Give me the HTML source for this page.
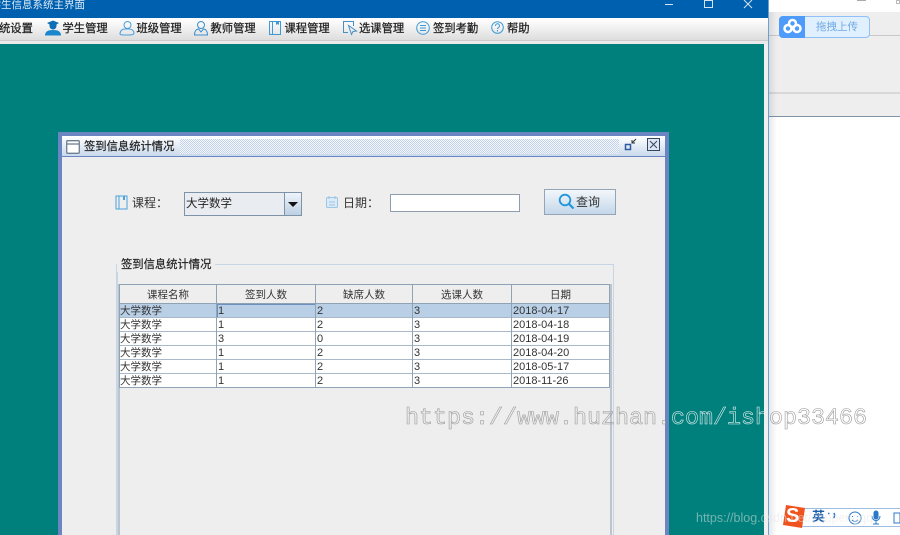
<!DOCTYPE html>
<html><head><meta charset="utf-8">
<style>
*{box-sizing:border-box;margin:0;padding:0}
html,body{width:900px;height:535px;overflow:hidden;background:#fff}
body{position:relative;font-family:"Liberation Sans","Noto Sans CJK SC",sans-serif;font-size:11px;color:#333;filter:blur(.25px)}
.a{position:absolute}
.t{position:absolute;white-space:nowrap;line-height:14px}
.m{font-size:11.300px;color:#222;top:22px;-webkit-text-stroke:.25px #222}
.h{position:absolute;top:285px;height:19px;line-height:20px;text-align:center;font-size:10.500px;color:#333;background:#eee;border-right:1px solid #8fa3b5}
.c{position:absolute;height:14px;line-height:14px;font-size:10.500px;color:#333;padding-left:1px;white-space:nowrap}
.n{font-size:11px}
.vl{position:absolute;width:1px;background:#8fa3b5;top:304px;height:83px}
.hl{position:absolute;left:120px;width:489px;height:1px;background:#a9b9c9}
</style></head><body>
<!-- app window -->
<div class="a" style="left:0;top:0;width:768px;height:18px;background:#0060b0"></div>
<div class="t" style="left:-9.500px;top:-2px;color:#dceaf6;font-size:10.500px">学生信息系统主界面</div>
<svg class="a" style="left:660px;top:0" width="100" height="12" fill="none" stroke="#d6e4f2" stroke-width="1"><path d="M5 4.500h8M44.500 .5h8v7h-8zM84 0l8 8M92 0l-8 8"/></svg>
<div class="a" style="left:0;top:18px;width:768px;height:22px;background:linear-gradient(#fff,#f6f6f6 30%,#ddd)"></div>
<div class="a" style="left:0;top:40px;width:768px;height:4px;background:#eaeaea;border-top:1px solid #ccc"></div>
<div class="t m" style="left:-1px">统设置</div>
<svg class="a" style="left:45px;top:20px" width="16" height="16"><path d="M2 3l6-2.500L14 3l-2.500 1.500V6a3.500 3.500 0 0 1-7 0V4.500z" fill="#0f6fb5"/><path d="M0 15.500c0-4 3-5.500 8-5.500s8 1.500 8 5.500z" fill="#1a86cc"/></svg>
<div class="t m" style="left:62.500px">学生管理</div>
<svg class="a" style="left:119px;top:20px" width="16" height="16" fill="none" stroke="#4a9fdc"><circle cx="8.500" cy="5" r="3.500"/><path d="M1 14c0-3 2-5 5-5h4c3 0 5 2 5 4 0 2-3 2-7 2s-7 0-7-1z"/></svg>
<div class="t m" style="left:136.500px">班级管理</div>
<svg class="a" style="left:193px;top:20px" width="16" height="16" fill="none" stroke="#3d8fcc"><circle cx="8" cy="5" r="3.500"/><path d="M1.500 15c0-4 2-6 4-6l2.500 3 2.500-3c2 0 4 2 4 6z"/></svg>
<div class="t m" style="left:210.500px">教师管理</div>
<svg class="a" style="left:268px;top:20px" width="14" height="16" fill="none" stroke="#3d9ad6"><path d="M1.500 1.500h11v13h-11zM4.500 1.500v13"/><path d="M8 1v4l1.500-1 1.500 1V1z" fill="#3d9ad6" stroke="none"/></svg>
<div class="t m" style="left:284.500px">课程管理</div>
<svg class="a" style="left:342px;top:20px" width="16" height="16" fill="none" stroke="#4a8fc4"><path d="M11.500 6V1.500h-10v11H6"/><path d="M6.500 5.500l3 9 1.500-3 3.500-.5z"/></svg>
<div class="t m" style="left:359px">选课管理</div>
<svg class="a" style="left:416px;top:21px" width="14" height="14" fill="none" stroke="#3d9ad6"><circle cx="7" cy="7" r="6.300"/><path d="M4 4.500h6M4 7h6M4 9.500h6" stroke-width="1"/></svg>
<div class="t m" style="left:433px">签到考勤</div>
<svg class="a" style="left:491px;top:21px" width="13" height="13" fill="none" stroke="#3d9ad6"><circle cx="6.500" cy="6.500" r="5.800"/><path d="M4.500 5c0-3 4-3 4 0 0 1.500-2 1.500-2 3M6.500 9v1.500"/></svg>
<div class="t m" style="left:507px">帮助</div>

<!-- teal desktop -->
<div class="a" style="left:0;top:44px;width:764px;height:491px;background:#00807c"></div>
<div class="a" style="left:764px;top:44px;width:4px;height:491px;background:#f0f0f0"></div>
<div class="a" style="left:768px;top:0;width:1px;height:535px;background:#6ba0d6"></div>

<!-- right panel -->
<div class="a" style="left:769px;top:0;width:131px;height:12px;background:#fff"></div>
<div class="a" style="left:769px;top:12px;width:131px;height:104px;background:#eee"></div>
<div class="a" style="left:769px;top:35px;width:131px;height:1px;background:#c8c8c8"></div>
<div class="a" style="left:769px;top:92px;width:131px;height:2px;background:#d8d8d8"></div>
<div class="a" style="left:769px;top:116px;width:131px;height:1px;background:#7f93a6"></div>
<div class="a" style="left:769px;top:12px;width:8px;height:523px;background:linear-gradient(90deg,rgba(0,0,0,.09),rgba(0,0,0,0))"></div>
<div class="a" style="left:857px;top:0;width:9px;height:1px;background:#aaa"></div>
<div class="a" style="left:896px;top:0;width:4px;height:4px;border:1px solid #bbb"></div>
<div class="a" style="left:779px;top:16px;width:91px;height:22px;background:#e0f0ff;border:1px solid #8fc0f8;border-radius:4px"></div>
<div class="a" style="left:779px;top:16px;width:26px;height:22px;background:#4f9bfa;border-radius:4px 0 0 4px"></div>
<svg class="a" style="left:782px;top:18px" width="22" height="18" fill="none" stroke="#fff" stroke-width="2.500"><circle cx="6" cy="10.500" r="3.500"/><circle cx="15" cy="10.500" r="3.500"/><circle cx="10.500" cy="5.500" r="3.500"/></svg>
<div class="t" style="left:816px;top:20px;font-size:10.500px;color:#6fa8e0">拖拽上传</div>

<!-- internal frame -->
<div class="a" style="left:58px;top:132px;width:611px;height:403px;background:#6a85c2"></div>
<div class="a" style="left:62px;top:136px;width:603px;height:399px;background:#eee"></div>
<div class="a" style="left:62px;top:136px;width:603px;height:21px;background:linear-gradient(#fff,#c9d9ec);border-bottom:1px solid #6a85c2"></div>
<div class="a" style="left:180px;top:139px;width:439px;height:15px;background:repeating-conic-gradient(#c3d2e8 0 25%,#f4f7fb 0 50%) 0 0/2px 2px"></div>
<svg class="a" style="left:66px;top:140px" width="14" height="14" fill="#fff" stroke="#6e7f92" stroke-width="1.300"><rect x=".7" y=".7" width="12.600" height="12.600" rx="1"/><path d="M1 4h12" fill="none"/></svg>
<div class="t" style="left:84px;top:140px;font-size:11.300px;color:#222;-webkit-text-stroke:.2px #222">签到信息统计情况</div>
<svg class="a" style="left:624px;top:137px" width="14" height="15" fill="none" stroke="#2f5a9e"><rect x="1.500" y="7.500" width="5" height="5" stroke-width="1.500"/><path d="M12 2L8 6M8 3v3h3" stroke="#333"/></svg>
<svg class="a" style="left:647px;top:138px" width="14" height="14" fill="#dde6f2" stroke="#34465e"><rect x=".5" y=".5" width="12" height="12"/><path d="M3 3l7 7M10 3l-7 7" fill="none"/></svg>

<!-- form -->
<svg class="a" style="left:115px;top:195px" width="13" height="15" fill="none" stroke="#4aa3dc"><path d="M1 1h11v13H1zM4 1v13"/><path d="M8 1v4h2V1z" fill="#4aa3dc" stroke="none"/></svg>
<div class="t" style="left:132px;top:196px;font-size:12px;color:#333">课程：</div>
<div class="a" style="left:184px;top:192px;width:118px;height:24px;border:1px solid #7f93a8;background:#e9ecf0"></div>
<div class="a" style="left:284px;top:193px;width:17px;height:22px;background:linear-gradient(#eef3f9,#bcd0e4);border-left:1px solid #7f93a8"></div>
<div class="a" style="left:288px;top:202px;width:0;height:0;border-left:5px solid transparent;border-right:5px solid transparent;border-top:5px solid #111"></div>
<div class="t" style="left:186px;top:197px;font-size:11.500px;color:#222">大学数学</div>
<svg class="a" style="left:326px;top:195px" width="13" height="14" fill="#dceaf6" stroke="#9cc6e6"><rect x=".5" y="2.500" width="11" height="10" rx="1"/><path d="M3 1v3M9 1v3M3 7h6M3 10h6" fill="none"/></svg>
<div class="t" style="left:343px;top:196px;font-size:12px;color:#333">日期：</div>
<div class="a" style="left:390px;top:194px;width:130px;height:18px;background:#fff;border:1px solid #8e9eae"></div>
<div class="a" style="left:544px;top:189px;width:72px;height:26px;background:linear-gradient(#f3f6fa,#c4d7e9);border:1px solid #93a6b8"></div>
<svg class="a" style="left:558px;top:193px" width="17" height="17" fill="none" stroke="#1f96de" stroke-width="1.800"><circle cx="7" cy="7" r="5.300"/><path d="M11 11l4.500 4.500" stroke-width="2.200"/></svg>
<div class="t" style="left:576px;top:195px;font-size:12px;color:#333">查询</div>

<!-- group -->
<div class="a" style="left:116px;top:264px;width:498px;height:271px;border:1px solid #c7d5e4;border-left-width:2px;border-bottom:0"></div>
<div class="t" style="left:117px;top:258px;padding:0 4px;background:#eee;font-size:11.300px;color:#222;-webkit-text-stroke:.2px #222">签到信息统计情况</div>

<!-- table -->
<div class="a" style="left:118px;top:284px;width:2px;height:251px;background:#bcc5ce"></div>
<div class="a" style="left:610px;top:284px;width:2px;height:251px;background:#bcc5ce"></div>
<div class="a" style="left:119px;top:284px;width:491px;height:104px;background:#fff;border:1px solid #8fa3b5"></div>
<div class="h" style="left:120px;width:97px">课程名称</div>
<div class="h" style="left:217px;width:99px">签到人数</div>
<div class="h" style="left:316px;width:97px">缺席人数</div>
<div class="h" style="left:413px;width:99px">选课人数</div>
<div class="h" style="left:512px;width:97px;border-right:0">日期</div>
<div class="a" style="left:120px;top:304px;width:489px;height:13px;background:#b8cfe6"></div>
<div class="a" style="left:217px;top:304px;width:99px;height:14px;border:1px solid #6f8fc0"></div>
<div class="hl" style="top:303px;background:#8fa3b5"></div>
<div class="hl" style="top:317px"></div>
<div class="hl" style="top:331px"></div>
<div class="hl" style="top:345px"></div>
<div class="hl" style="top:359px"></div>
<div class="hl" style="top:373px"></div>
<div class="vl" style="left:216px"></div>
<div class="vl" style="left:315px"></div>
<div class="vl" style="left:412px"></div>
<div class="vl" style="left:511px"></div>

<div class="c" style="left:119px;top:304px">大学数学</div><div class="c n" style="left:217px;top:304px">1</div><div class="c n" style="left:316px;top:304px">2</div><div class="c n" style="left:413px;top:304px">3</div><div class="c n" style="left:512px;top:304px">2018-04-17</div>
<div class="c" style="left:119px;top:318px">大学数学</div><div class="c n" style="left:217px;top:318px">1</div><div class="c n" style="left:316px;top:318px">2</div><div class="c n" style="left:413px;top:318px">3</div><div class="c n" style="left:512px;top:318px">2018-04-18</div>
<div class="c" style="left:119px;top:332px">大学数学</div><div class="c n" style="left:217px;top:332px">3</div><div class="c n" style="left:316px;top:332px">0</div><div class="c n" style="left:413px;top:332px">3</div><div class="c n" style="left:512px;top:332px">2018-04-19</div>
<div class="c" style="left:119px;top:346px">大学数学</div><div class="c n" style="left:217px;top:346px">1</div><div class="c n" style="left:316px;top:346px">2</div><div class="c n" style="left:413px;top:346px">3</div><div class="c n" style="left:512px;top:346px">2018-04-20</div>
<div class="c" style="left:119px;top:360px">大学数学</div><div class="c n" style="left:217px;top:360px">1</div><div class="c n" style="left:316px;top:360px">2</div><div class="c n" style="left:413px;top:360px">3</div><div class="c n" style="left:512px;top:360px">2018-05-17</div>
<div class="c" style="left:119px;top:374px">大学数学</div><div class="c n" style="left:217px;top:374px">1</div><div class="c n" style="left:316px;top:374px">2</div><div class="c n" style="left:413px;top:374px">3</div><div class="c n" style="left:512px;top:374px">2018-11-26</div>

<!-- sogou IME -->
<div class="a" style="left:800px;top:508px;width:100px;height:19px;background:#fff;border:1px solid #9dbde2;border-right:0"></div>
<svg class="a" style="left:782px;top:504px" width="24" height="25"><path d="M4 1l19 3-3 20-19-3z" fill="#f0541e"/></svg>
<div class="t" style="left:786px;top:505px;font-size:20px;font-weight:bold;color:#fff;line-height:22px">S</div>
<div class="t" style="left:812px;top:510px;font-size:13px;color:#1d5fae;font-weight:bold">英</div>
<svg class="a" style="left:826px;top:506px" width="74" height="22" fill="none" stroke="#2b78c6"><path d="M2 7.500h1.500M8 7c1 2 .5 4-.5 5" stroke-width="1.500"/><circle cx="29" cy="12" r="6"/><path d="M26.500 10v1M31.500 10v1M26 14c2 2 4 2 6 0"/><rect x="48" y="5" width="4" height="8" rx="2" fill="#2b78c6"/><path d="M46 10c0 6 8 6 8 0M50 15v3M47 18h6"/><rect x="68" y="7" width="6" height="10"/></svg>

<!-- watermarks -->
<div class="t" style="left:405px;top:405px;font:23.340px/28px 'Liberation Mono',monospace;color:transparent;-webkit-text-stroke:.6px #9a9a9a;">https://www.huzhan.<span style="-webkit-text-stroke:.6px #dfeeee">com/ish</span>op33466</div>
<div class="t" style="left:696px;top:511px;font-size:12.500px;color:rgba(230,230,230,.5)">https://blog.csdn.net/zhupengqq</div>
</body></html>
